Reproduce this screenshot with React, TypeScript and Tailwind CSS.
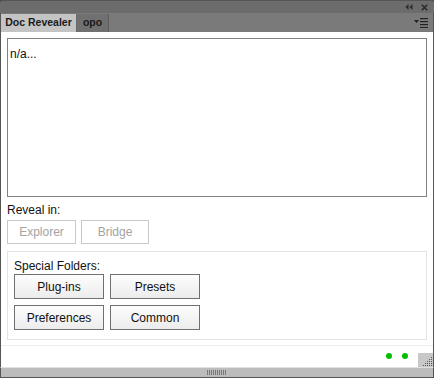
import React from "react";

const font = { fontFamily: '"Liberation Sans", Arial, sans-serif' };

function Btn({ label, disabled, w }: { label: string; disabled?: boolean; w: string }) {
  if (disabled) {
    return (
      <div className={`${w} h-[24px] border border-[#c9c9c9] bg-white text-[#a3a3a3] text-[12px] flex items-center justify-center`}>
        {label}
      </div>
    );
  }
  return (
    <div className={`${w} h-[25px] border border-[#707070] bg-gradient-to-b from-[#fdfdfd] to-[#ececec] text-[#111] text-[12px] flex items-center justify-center`}>
      {label}
    </div>
  );
}

export default function App() {
  return (
    <div className="w-[434px] h-[378px] flex flex-col bg-[#4c4c4c] select-none" style={font}>
      {/* title bar */}
      <div className="h-[13px] bg-[#6c6c6c] border-t border-[#555] rounded-t-[3px] flex items-center justify-end pr-[6px] gap-[8px]">
        <svg width="8" height="6" viewBox="0 0 8 6">
          <path d="M3.5 0 L0.5 3 L3.5 6 Z M7.5 0 L4.5 3 L7.5 6 Z" fill="#2a2a2a" />
        </svg>
        <svg width="7" height="7" viewBox="0 0 7 7">
          <path d="M0.8 0.8 L6.2 6.2 M6.2 0.8 L0.8 6.2" stroke="#2a2a2a" strokeWidth="1.6" />
        </svg>
      </div>
      {/* tab row */}
      <div className="h-[19px] bg-[#7a7a7a] flex items-end border-x border-[#555]">
        <div className="h-[18px] w-[76px] bg-[#c4c4c4] text-[#1a1a1a] text-[10.5px] font-bold flex items-center justify-center border-r border-[#6a6a6a]">
          Doc Revealer
        </div>
        <div className="h-[18px] w-[32px] bg-[#707070] text-[#1a1a1a] text-[10.5px] font-bold flex items-center justify-center border-r border-[#5c5c5c]">
          opo
        </div>
        <div className="flex-1 h-[18px] flex items-center justify-end pr-[5px]">
          <svg width="14" height="10" viewBox="0 0 14 10">
            <path d="M0 2 L5 2 L2.5 5 Z" fill="#222" />
            <rect x="6" y="0" width="8" height="1.2" fill="#222" />
            <rect x="6" y="3" width="8" height="1.2" fill="#222" />
            <rect x="6" y="6" width="8" height="1.2" fill="#222" />
            <rect x="6" y="9" width="8" height="1.2" fill="#222" />
          </svg>
        </div>
      </div>
      {/* body */}
      <div className="flex-1 bg-white border-x border-[#555] flex flex-col">
        <div className="px-[6px] pt-[6px] flex flex-col">
          <div className="h-[159px] border border-[#828282] px-[2px] pt-[6px] text-[12px] text-[#111]">
            n/a...
          </div>
          <div className="mt-[5px] text-[12px] text-[#111] leading-[16px]">Reveal in:</div>
          <div className="mt-[2px] flex gap-[5px]">
            <Btn label="Explorer" disabled w="w-[69px]" />
            <Btn label="Bridge" disabled w="w-[68px]" />
          </div>
          <div className="mt-[7px] h-[89px] w-[420px] border border-[#e3e3e3] px-[6px] pt-[7px] flex flex-col">
            <div className="text-[12px] text-[#111] leading-[14px]">Special Folders:</div>
            <div className="mt-[1px] grid grid-cols-[90px_90px] gap-x-[6px] gap-y-[6px]">
              <Btn label="Plug-ins" w="w-[90px]" />
              <Btn label="Presets" w="w-[90px]" />
              <Btn label="Preferences" w="w-[90px]" />
              <Btn label="Common" w="w-[90px]" />
            </div>
          </div>
        </div>
        <div className="mt-[5px] border-t border-[#ececec] flex-1 flex items-end justify-end">
          <div className="flex items-center gap-[10px] mb-[8px] mr-[10px]">
            <div className="w-[6px] h-[6px] rounded-full bg-[#00c000]" />
            <div className="w-[6px] h-[6px] rounded-full bg-[#00c000]" />
          </div>
          <div className="w-[15px] h-[14px] bg-[#c8c8c8] flex items-end justify-end">
            <svg width="12" height="11" viewBox="0 0 12 11">
              {[
                [10, 1], [8, 3], [10, 3], [6, 5], [8, 5], [10, 5], [4, 7], [6, 7], [8, 7], [10, 7], [2, 9], [4, 9], [6, 9], [8, 9], [10, 9],
              ].map(([x, y], i) => (
                <rect key={i} x={x} y={y} width="1" height="1" fill="#555" />
              ))}
            </svg>
          </div>
        </div>
      </div>
      {/* bottom bar */}
      <div className="h-[11px] bg-[#bcbcbc] border-t border-[#e0e0e0] border-x border-b border-x-[#555] border-b-[#555] flex items-center justify-center">
        <svg width="20" height="5" viewBox="0 0 20 5">
          {[0, 2, 4, 6, 8, 10, 12, 14, 16, 18].map((x) => (
            <rect key={x} x={x} y="0" width="1" height="5" fill="#777" />
          ))}
        </svg>
      </div>
    </div>
  );
}
